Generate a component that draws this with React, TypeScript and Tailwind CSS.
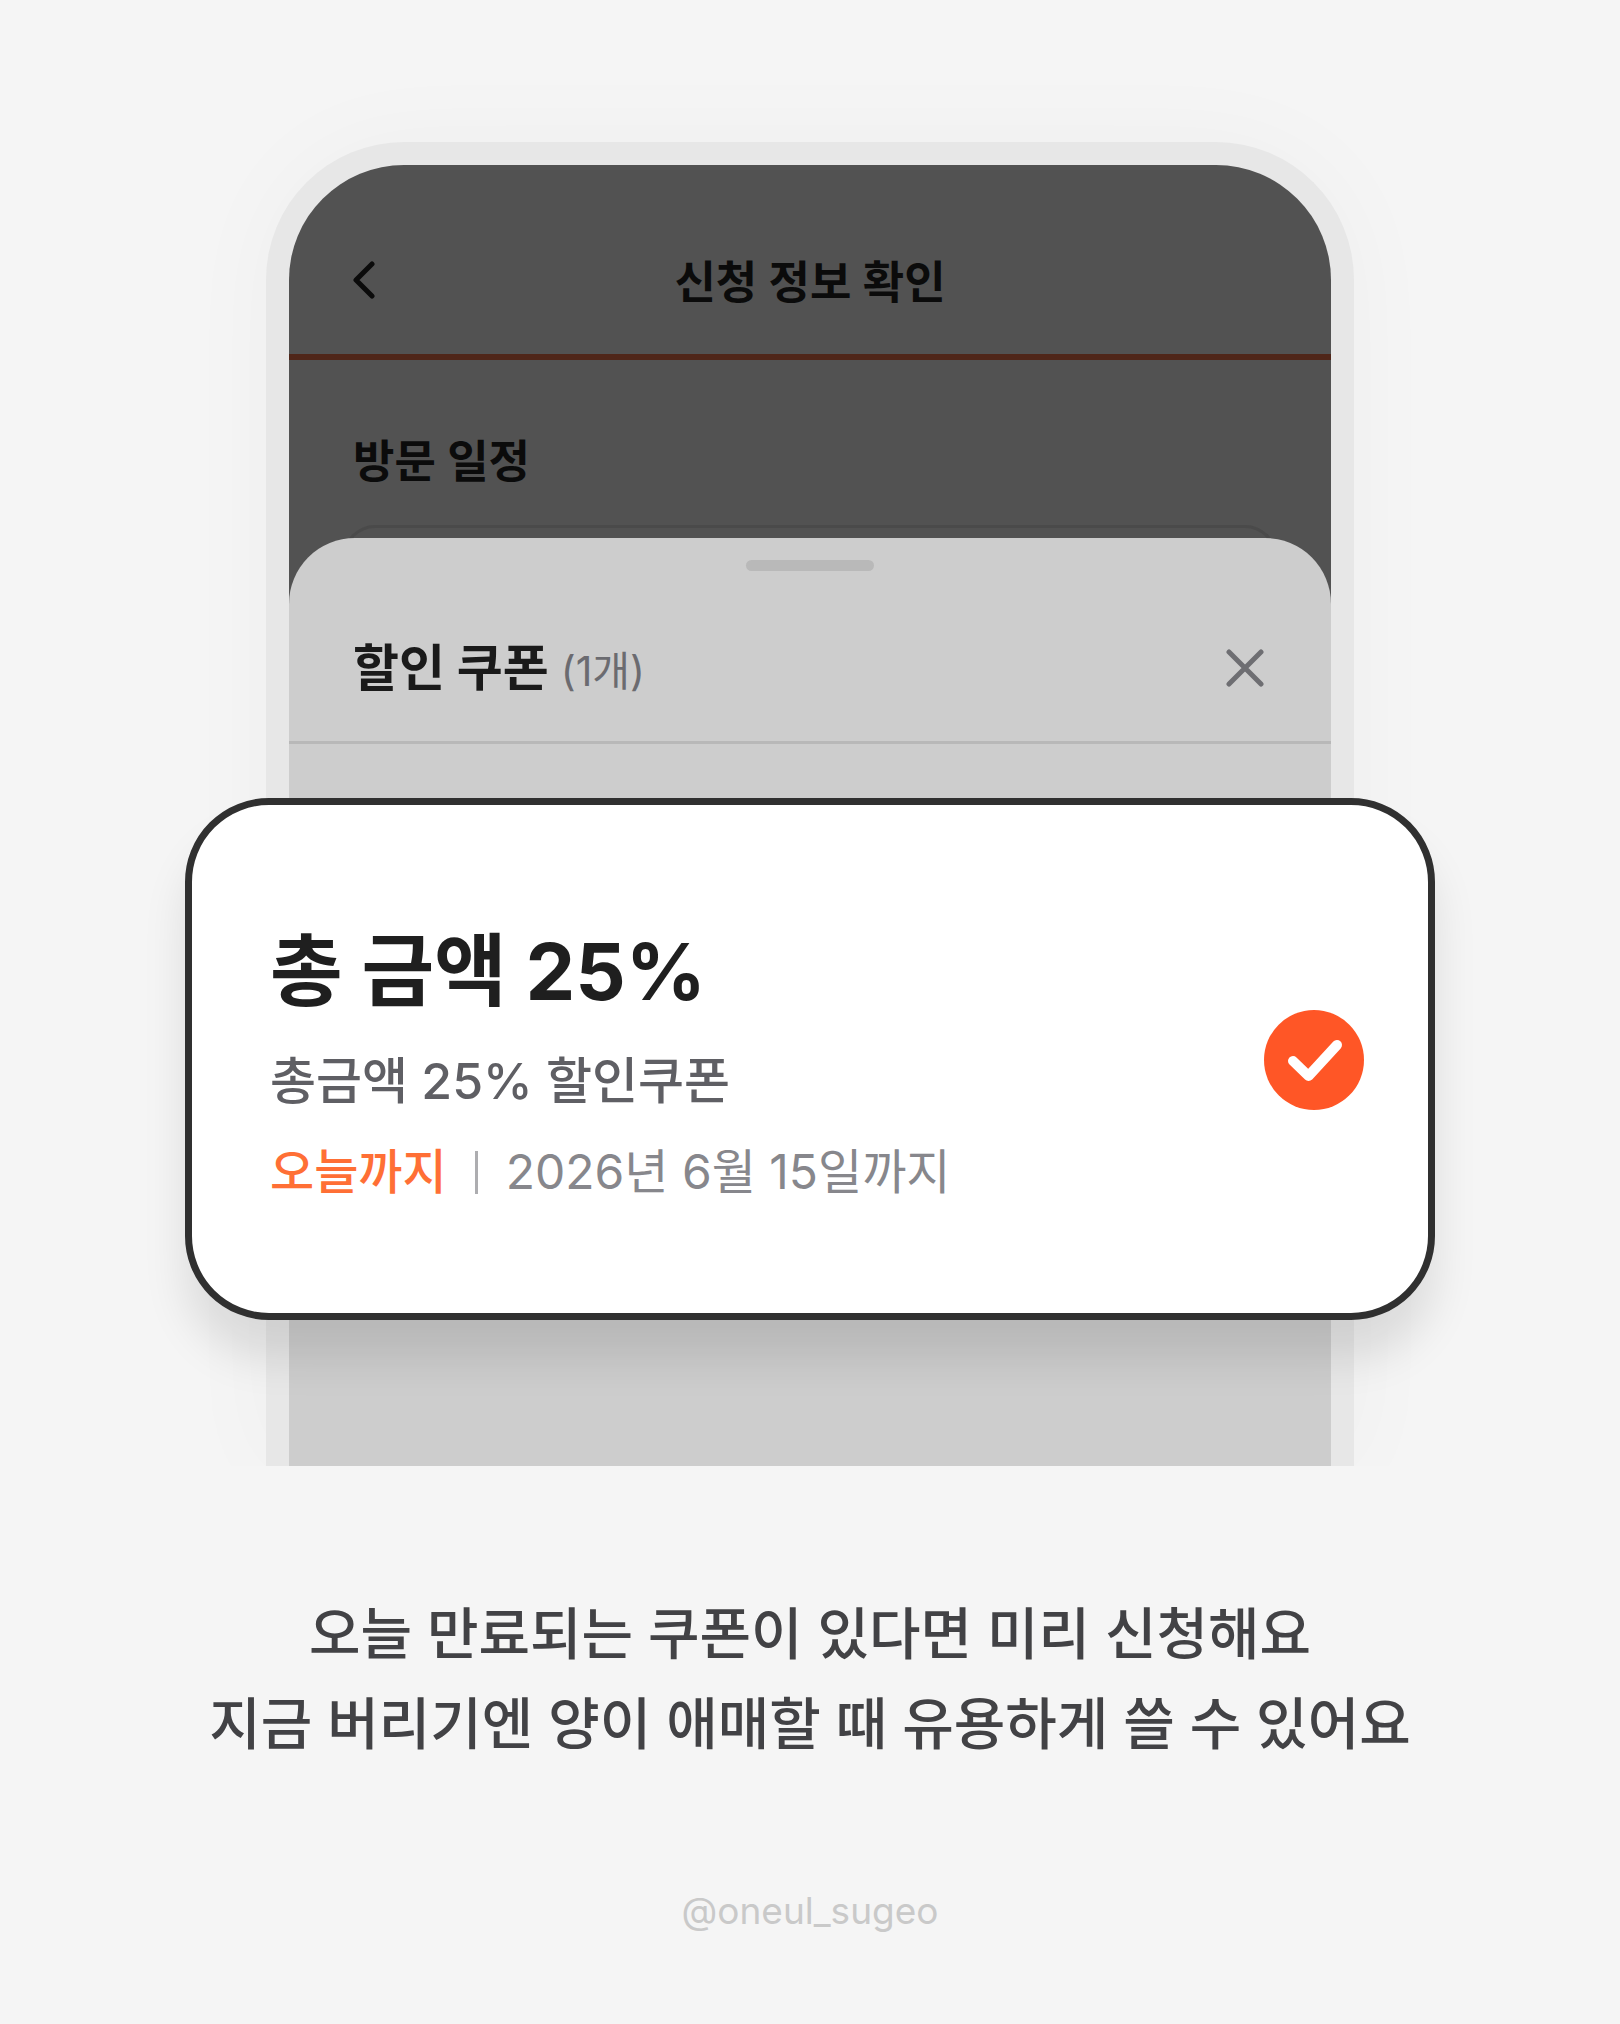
const coupon = {
  title: "총 금액 25%",
  description: "총금액 25% 할인쿠폰",
  badge: "오늘까지",
  expires: "2026년 6월 15일까지",
};

function BackIcon() {
  return (
    <svg width="22" height="38" viewBox="0 0 22 38" fill="none">
      <path
        d="M19 3L3 19L19 35"
        stroke="currentColor"
        strokeWidth="5"
        strokeLinecap="round"
        strokeLinejoin="round"
      />
    </svg>
  );
}

function CloseIcon() {
  return (
    <svg width="38" height="38" viewBox="0 0 38 38" fill="none">
      <path
        d="M3 3L35 35M35 3L3 35"
        stroke="currentColor"
        strokeWidth="5"
        strokeLinecap="round"
      />
    </svg>
  );
}

function CheckIcon() {
  return (
    <svg
      width="100"
      height="100"
      viewBox="0 0 100 100"
      fill="none"
      className="pointer-events-none col-start-1 row-start-1"
    >
      <path
        d="M29 51L44.5 66L73 35"
        stroke="white"
        strokeWidth="10"
        strokeLinecap="round"
        strokeLinejoin="round"
      />
    </svg>
  );
}

function CouponCard() {
  return (
    <label className="-mx-[104px] flex items-center justify-between gap-8 rounded-[84px] border-[7px] border-[#303030] bg-white pt-[113px] pr-16 pb-[111px] pl-[78px] shadow-[0_38px_44px_rgba(0,0,0,0.1)]">
      <div>
        <p className="text-[79px] leading-[106px] font-bold text-[#1f1f1f]">
          {coupon.title}
        </p>
        <p className="mt-[22px] text-[50px] leading-[70px] font-medium text-[#5f5f64]">
          {coupon.description}
        </p>
        <div className="mt-[26px] flex items-center text-[48px] leading-[60px]">
          <span className="font-medium text-[#ff6f35]">{coupon.badge}</span>
          <span className="mx-7 h-[43px] w-[3px] bg-[#adadb0]" />
          <span className="text-[#87878c]">{coupon.expires}</span>
        </div>
      </div>
      <span className="grid shrink-0">
        <input
          type="checkbox"
          defaultChecked
          className="col-start-1 row-start-1 size-[100px] appearance-none rounded-full bg-[#d4d4d4] checked:bg-[#ff5626]"
        />
        <CheckIcon />
      </span>
    </label>
  );
}

function CouponSheet() {
  return (
    <div className="relative -mt-7 rounded-t-[66px] bg-[#cdcdcd] pt-[22px]">
      <div className="mx-auto h-[11px] w-32 rounded-full bg-[#b9b9b9]" />
      <div className="mt-[62px] flex items-center justify-between border-b-[3px] border-[#b8b8b8] pr-[67px] pb-[38px] pl-16">
        <h2 className="text-[50px] leading-[70px] font-bold text-[#1a1a1a]">
          할인 쿠폰{" "}
          <span className="text-[41px] leading-none font-normal text-[#6b6b70]">
            (1개)
          </span>
        </h2>
        <button type="button" aria-label="닫기" className="text-[#6e6e72]">
          <CloseIcon />
        </button>
      </div>
      <div className="pt-[54px] pb-[146px]">
        <CouponCard />
      </div>
    </div>
  );
}

function Phone() {
  return (
    <div className="mx-auto w-full max-w-[1088px] rounded-t-[138px] border-[23px] border-b-0 border-[#e7e7e7] bg-[#e7e7e7] shadow-[0_0_100px_rgba(0,0,0,0.03)]">
      <div className="rounded-t-[115px] bg-[#525252] text-[#0b0b0b]">
        <header className="grid grid-cols-[1fr_auto_1fr] border-b-[6px] border-[#4f2619] px-16 pt-[88px] pb-[41px]">
          <button type="button" aria-label="뒤로" className="h-[54px] w-6">
            <BackIcon />
          </button>
          <h1 className="text-[45px] leading-[60px] font-semibold">
            신청 정보 확인
          </h1>
        </header>
        <h2 className="mb-[33px] px-16 pt-[72px] text-[45px] leading-[60px] font-semibold">
          방문 일정
        </h2>
        <div className="mx-[54px] h-[41px] rounded-t-[32px] border-[3px] border-b-0 border-[#4a4a4a]" />
        <CouponSheet />
      </div>
    </div>
  );
}

export default function App() {
  return (
    <main className="min-h-screen bg-[#f5f5f5] font-['Inter','Noto_Sans_CJK_KR',sans-serif]">
      <section className="overflow-hidden pt-[142px]">
        <Phone />
      </section>
      <p className="pt-[123px] text-center text-[56px] leading-[90px] font-medium text-[#424245]">
        오늘 만료되는 쿠폰이 있다면 미리 신청해요
        <br />
        지금 버리기엔 양이 애매할 때 유용하게 쓸 수 있어요
      </p>
      <p className="mt-[117px] pb-[87px] text-center text-[37px] leading-[50px] text-[#c9c9c9]">
        @oneul_sugeo
      </p>
    </main>
  );
}
